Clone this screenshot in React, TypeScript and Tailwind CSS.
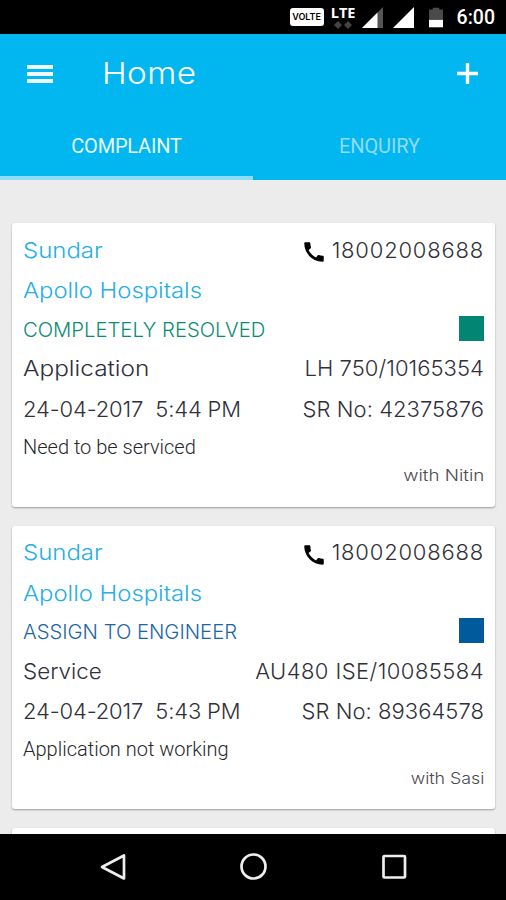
import { MdCall } from "react-icons/md";

const complaints = [
  {
    customer: "Sundar",
    hospital: "Apollo Hospitals",
    phone: "18002008688",
    status: "COMPLETELY RESOLVED",
    statusClass: "text-[#0c8a76]",
    squareClass: "bg-[#038574]",
    type: "Application",
    typeClass: "scale-x-[1.11]",
    machine: "LH 750/10165354",
    machineClass: "tracking-[0.05px]",
    date: "24-04-2017  5:44 PM",
    srNo: "SR No: 42375876",
    note: "Need to be serviced",
    engineer: "with Nitin",
    engineerClass: "scale-x-[1.17]",
  },
  {
    customer: "Sundar",
    hospital: "Apollo Hospitals",
    phone: "18002008688",
    status: "ASSIGN TO ENGINEER",
    statusClass: "text-[#1b65a3]",
    squareClass: "bg-[#015a9b]",
    type: "Service",
    typeClass: "scale-x-[1.02]",
    machine: "AU480 ISE/10085584",
    machineClass: "tracking-[0.45px]",
    date: "24-04-2017  5:43 PM",
    srNo: "SR No: 89364578",
    note: "Application not working",
    engineer: "with Sasi",
    engineerClass: "scale-x-[1.11]",
  },
];

const StatusBar = () => (
  <div className="flex h-[34px] shrink-0 items-center justify-end bg-black pr-[11px] text-white">
    <span className="flex h-[18px] w-[34px] items-center justify-center rounded-[3px] bg-white font-['Inter',sans-serif] text-[9px] font-semibold text-black">
      VOLTE
    </span>
    <div className="ml-[7px] flex h-[24px] w-[25px] flex-col items-center">
      <span className="font-['Open_Sans',sans-serif] text-[14.500px] leading-[16px] font-bold">LTE</span>
      <svg width="20" height="8" viewBox="0 0 20 8" fill="#444">
        <path d="M5 0l4 4-4 4-4-4zM15 0l4 4-4 4-4-4z" />
      </svg>
    </div>
    <svg className="ml-[5px]" width="23" height="21" viewBox="0 0 23 21">
      <path d="M22 0v21H1z" fill="#555" />
      <path d="M16.500 5.500V21H1z" fill="#fff" />
    </svg>
    <svg className="ml-[8px]" width="22" height="21" viewBox="0 0 22 21">
      <path d="M22 0v21H1z" fill="#fff" />
    </svg>
    <svg className="ml-[15px]" width="14" height="21" viewBox="0 0 15 21">
      <path d="M4 0h7v2h4v11H0V2h4z" fill="#4a4a4a" />
      <path d="M0 13h15v8H0z" fill="#fff" />
    </svg>
    <span className="mt-[2px] ml-[14px] font-['Roboto',sans-serif] text-[19.500px] font-medium">6:00</span>
  </div>
);

const Header = () => (
  <header className="flex h-[146px] shrink-0 flex-col bg-[#02b6f0] text-white">
    <div className="flex h-[79px] items-center pr-[28px] pl-[27px]">
      <button className="flex w-[26px] flex-col gap-[3px]" aria-label="Menu">
        <span className="h-[4px] bg-[#eefaff]" />
        <span className="h-[4px] bg-[#eefaff]" />
        <span className="h-[4px] bg-[#eefaff]" />
      </button>
      <h1 className="-mt-[2px] ml-[49px] origin-left scale-x-[1.11] font-['Inter',sans-serif] text-[30px] leading-none font-[350] tracking-[0.4px]">
        Home
      </h1>
      <button className="ml-auto" aria-label="Add">
        <svg width="21" height="21" viewBox="0 0 21 21" stroke="#fff" strokeWidth="3.400">
          <path d="M10.500 0v21M0 10.500h21" />
        </svg>
      </button>
    </div>
    <nav className="flex flex-1 font-['Roboto',sans-serif] text-[20px]">
      <div className="flex w-[253px] items-center justify-center border-b-[4px] border-[#8edcf7] pt-[2px] text-[#e6f8fe]">
        <span className="tracking-[-0.2px]">COMPLAINT</span>
      </div>
      <div className="flex w-[253px] items-center justify-center border-b-[4px] border-transparent pt-[2px] text-[#90dcf7]">
        <span className="tracking-[-0.1px]">ENQUIRY</span>
      </div>
    </nav>
  </header>
);

const ComplaintCard = ({ item }: { item: (typeof complaints)[number] }) => (
  <article className="h-[283.500px] shrink-0 rounded-[3px] bg-white px-[11px] pt-[7px] font-['Inter',sans-serif] text-[22px] font-light whitespace-pre text-[#30303a] shadow-[0_1px_2px_rgba(0,0,0,0.35)]">
    <div className="flex h-[40px] items-center justify-between">
      <span className="origin-left scale-x-[1.09] text-[#25aee8]">{item.customer}</span>
      <span className="flex items-center">
        <MdCall className="mt-[4px] mr-[5px] text-[26px] text-black" />
        <span className="tracking-[0.8px]">{item.phone}</span>
      </span>
    </div>
    <div className="flex h-[41px] items-center text-[#25aee8]">
      <span className="origin-left scale-x-[1.085]">{item.hospital}</span>
    </div>
    <div className="flex h-[37px] items-center justify-between text-[19.500px]">
      <span className={`mt-[2px] origin-left scale-x-[1.038] ${item.statusClass}`}>{item.status}</span>
      <span className={`mt-[-3px] h-[25px] w-[25px] ${item.squareClass}`} />
    </div>
    <div className="flex h-[41px] items-center justify-between">
      <span className={`origin-left ${item.typeClass}`}>{item.type}</span>
      <span className={item.machineClass}>{item.machine}</span>
    </div>
    <div className="flex h-[40px] items-center justify-between">
      <span className="tracking-[-0.15px]">{item.date}</span>
      <span className="tracking-[0.05px]">{item.srNo}</span>
    </div>
    <div className="flex h-[35px] items-center font-['Roboto',sans-serif] text-[20px] font-light text-[#25252c]">
      {item.note}
    </div>
    <div className="flex h-[22px] items-center justify-end text-[16px] text-[#4a4a50]">
      <span className={`origin-right ${item.engineerClass}`}>{item.engineer}</span>
    </div>
  </article>
);

const NavigationBar = () => (
  <footer className="flex h-[66px] shrink-0 items-center justify-center gap-[112px] bg-black">
    <svg width="28" height="30" viewBox="0 0 28 30" fill="none" stroke="#eee" strokeWidth="2.700">
      <path d="M25 3.500v23L3 15z" strokeLinejoin="round" />
    </svg>
    <svg width="28" height="30" viewBox="0 0 28 30" fill="none" stroke="#eee" strokeWidth="2.700">
      <circle cx="14.500" cy="14.500" r="12" />
    </svg>
    <svg width="28" height="30" viewBox="0 0 28 30" fill="none" stroke="#eee" strokeWidth="2.700">
      <rect x="4.500" y="4" width="21.500" height="21.500" rx="1" />
    </svg>
  </footer>
);

const App = () => {
  return (
    <div className="flex h-[900px] w-[506px] flex-col overflow-hidden bg-[#ececec]">
      <StatusBar />
      <Header />
      <main className="flex min-h-0 flex-1 flex-col gap-[19px] overflow-hidden pt-[43px] pr-[11px] pl-[12px]">
        {complaints.map((item) => (
          <ComplaintCard key={item.srNo} item={item} />
        ))}
        <div className="h-[20px] shrink-0 rounded-t-[3px] bg-white shadow-[0_1px_2px_rgba(0,0,0,0.35)]" />
      </main>
      <NavigationBar />
    </div>
  );
};

export default App;
